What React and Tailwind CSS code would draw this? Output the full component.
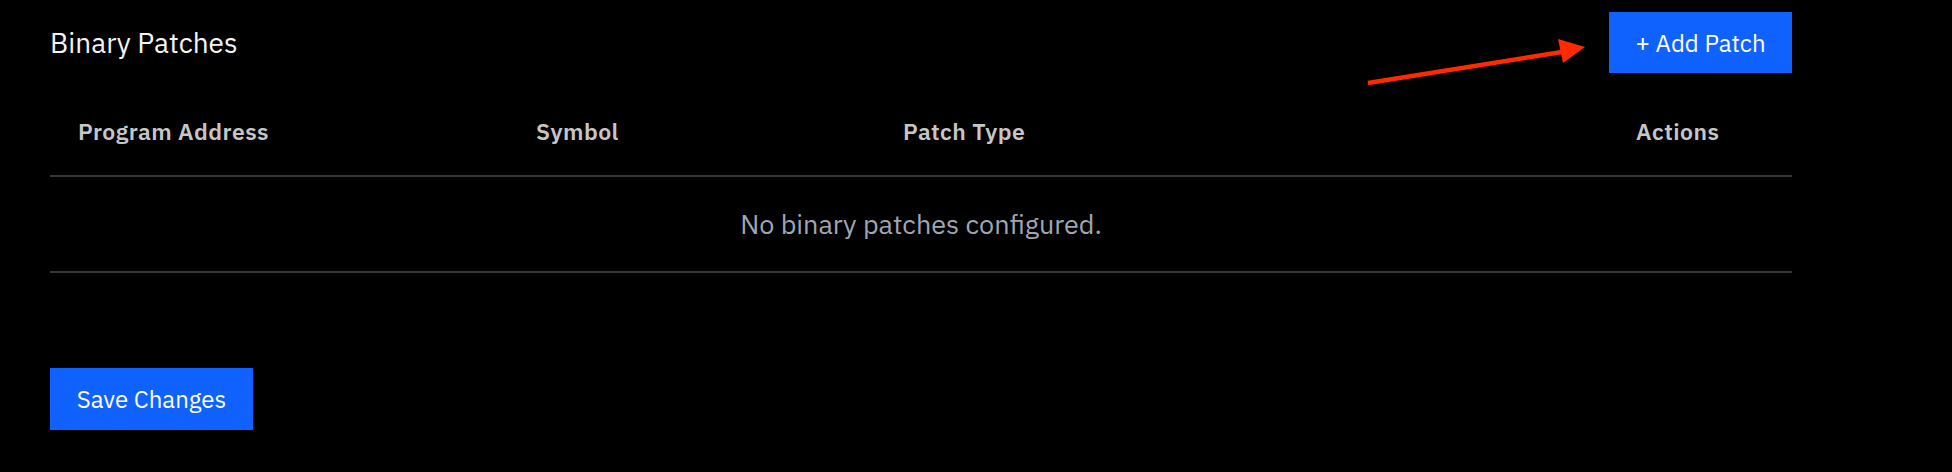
import React from 'react'

const columns = ['Program Address', 'Symbol', 'Patch Type', 'Actions']

function Arrow() {
  return (
    <svg
      className="absolute left-[1360px] top-[30px] pointer-events-none"
      width="240"
      height="60"
      viewBox="1360 30 240 60"
    >
      <line x1="1368" y1="83" x2="1562" y2="52" stroke="#ff2a00" strokeWidth="4.5" />
      <polygon points="1558,39 1563,63 1585,47" fill="#ff2a00" />
    </svg>
  )
}

export default function App() {
  return (
    <div
      className="relative min-h-[472px] w-full bg-black text-[#f4f4f4]"
      style={{ fontFamily: "'IBM Plex Sans', Roboto, 'Noto Sans', sans-serif" }}
    >
      <div className="ml-[50px] w-[1742px]">
        {/* title bar */}
        <div className="flex items-center justify-between pt-[12px]">
          <h2 className="text-[28px] leading-none font-normal">Binary Patches</h2>
          <button className="h-[61px] w-[183px] bg-[#0f62fe] text-[24px] text-white">
            + Add Patch
          </button>
        </div>

        {/* table */}
        <div className="mt-[16px]">
          <div className="grid h-[88px] grid-cols-[458px_367px_733px_184px] items-center border-b-2 border-[#393939] pb-[2px]">
            {columns.map((c) => (
              <div
                key={c}
                className="px-[28px] text-[23px] font-semibold tracking-[0.02em] text-[#c6c6c6]"
              >
                {c}
              </div>
            ))}
          </div>
          <div className="flex h-[96px] items-center justify-center border-b-2 border-[#393939] text-[27px] text-[#a0a6b1]">
            No binary patches configured.
          </div>
        </div>

        <button className="mt-[95px] h-[62px] w-[203px] bg-[#0f62fe] text-[24px] text-white">
          Save Changes
        </button>
      </div>

      <Arrow />
    </div>
  )
}
